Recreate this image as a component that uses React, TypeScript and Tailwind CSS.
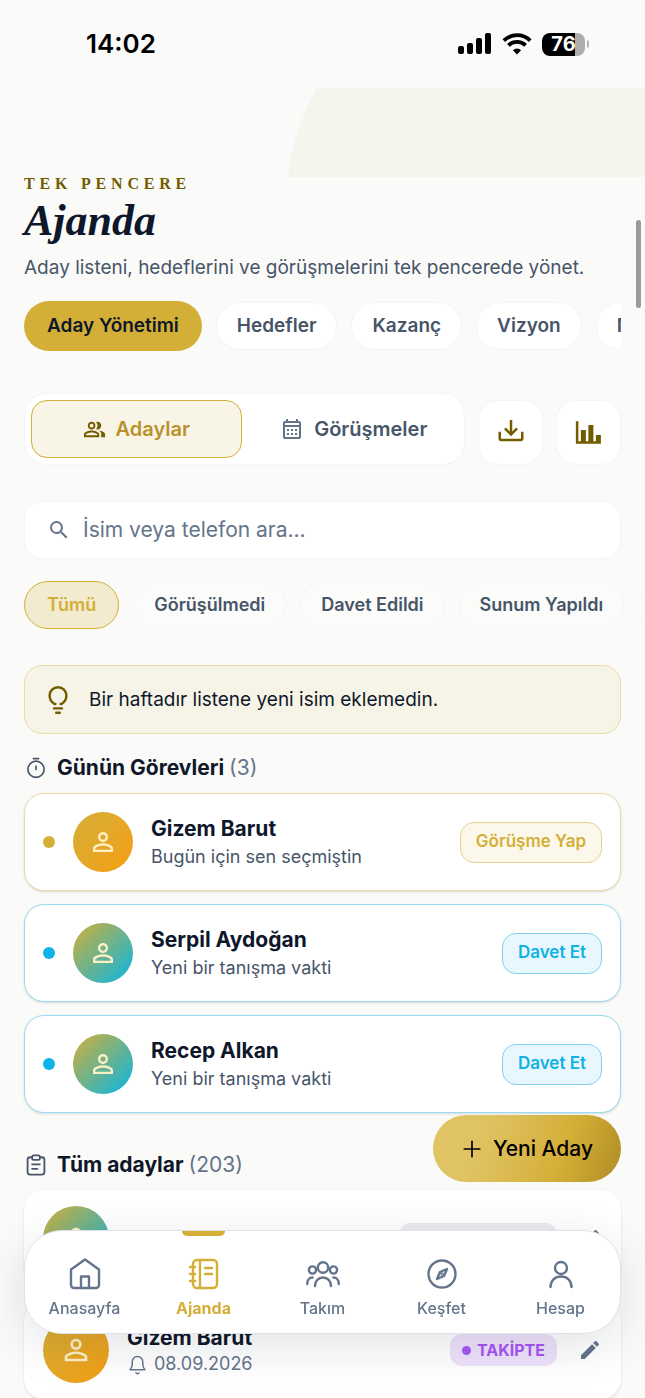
import type { ReactNode } from "react"
import { MdEdit, MdOutlineCalendarMonth, MdOutlinePeopleAlt, MdPersonOutline, MdSearch } from "react-icons/md"

const tabs = ["Hedefler", "Kazanç", "Vizyon", "Notlar"]
const filters = ["Görüşülmedi", "Davet Edildi", "Sunum Yapıldı", "Takipte"]

const tasks = [
  { name: "Gizem Barut", note: "Bugün için sen seçmiştin", action: "Görüşme Yap", tone: "gold" },
  { name: "Serpil Aydoğan", note: "Yeni bir tanışma vakti", action: "Davet Et", tone: "cyan" },
  { name: "Recep Alkan", note: "Yeni bir tanışma vakti", action: "Davet Et", tone: "cyan" },
]

const tones: Record<string, { card: string; dot: string; avatar: string; button: string }> = {
  gold: {
    card: "border-[#ecdba4]",
    dot: "bg-[#d4af37]",
    avatar: "bg-linear-to-br from-[#d4af37] to-[#f59e0b]",
    button: "border-[#e6d28c] bg-[#fbf7eb] text-[#d4af37]",
  },
  cyan: {
    card: "border-[#98dbf2]",
    dot: "bg-[#0fb2ea]",
    avatar: "bg-[linear-gradient(135deg,#d4af37,#06b6e4)]",
    button: "border-[#80d2ef] bg-[#e8f7fd] text-[#0fb2e4]",
  },
}

function Stroke({ size, width = 2, children }: { size: number; width?: number; children: ReactNode }) {
  return (
    <svg
      width={size}
      height={size}
      viewBox="0 0 34 34"
      fill="none"
      stroke="currentColor"
      strokeWidth={width}
      strokeLinecap="round"
      strokeLinejoin="round"
      className="shrink-0"
      aria-hidden="true"
    >
      {children}
    </svg>
  )
}

function StatusBar() {
  return (
    <div className="flex h-[88px] items-center justify-between pr-14 pl-[86px] text-black">
      <span className="text-[26px] leading-8 font-semibold">14:02</span>
      <div className="flex items-center gap-2.5">
        <svg width="34" height="22" viewBox="0 0 34 22" fill="currentColor" aria-hidden="true">
          <rect x="0" y="13" width="6" height="8" rx="2" />
          <rect x="9" y="10" width="6" height="11" rx="2" />
          <rect x="18" y="5" width="6" height="16" rx="2" />
          <rect x="27" y="0" width="6" height="21" rx="2" />
        </svg>
        <svg width="30" height="22" viewBox="0 0 30 22" fill="none" stroke="currentColor" strokeWidth="3.8" aria-hidden="true">
          <path d="M1.8 7.6a18.8 18.8 0 0 1 26.4 0" />
          <path d="M6.4 12.4a12.2 12.2 0 0 1 17.2 0" />
          <path d="M15 21.6l-4.1-4.4a5.9 5.9 0 0 1 8.2 0z" fill="currentColor" stroke="none" />
        </svg>
        <div className="flex items-center gap-0.5">
          <div className="flex h-[23px] w-[43px] items-center justify-center rounded-lg bg-linear-to-r from-black from-77% to-[#adadad] to-77% text-xl leading-6 font-bold text-white">
            76
          </div>
          <div className="h-2 w-0.5 rounded-r-full bg-[#b5b5b5]" />
        </div>
      </div>
    </div>
  )
}

function SectionTitle({ icon, title, count }: { icon: ReactNode; title: string; count: number }) {
  return (
    <h2 className="flex items-center gap-2.5 px-px text-[21px] leading-7 font-bold text-[#0f172a]">
      <span className="text-[#475569]">{icon}</span>
      <span>
        {title} <span className="font-normal text-[#64748b]">({count})</span>
      </span>
    </h2>
  )
}

function TaskCard({ task }: { task: (typeof tasks)[number] }) {
  const tone = tones[task.tone]
  return (
    <li className={`flex h-[98px] items-center rounded-[20px] border bg-white px-[18px] shadow-sm ${tone.card}`}>
      <span className={`size-3 shrink-0 rounded-full ${tone.dot}`} />
      <span className={`ml-[18px] flex size-15 shrink-0 items-center justify-center rounded-full text-[#fbf0c4] ${tone.avatar}`}>
        <MdPersonOutline size={30} />
      </span>
      <div className="ml-[18px] flex-1 pt-0.5">
        <h3 className="text-[21px] leading-7 font-bold text-[#0f172a]">{task.name}</h3>
        <p className="text-lg leading-7 text-[#475569]">{task.note}</p>
      </div>
      <button type="button" className={`h-[41px] rounded-[14px] border px-[15px] text-[17px] font-semibold ${tone.button}`}>
        {task.action}
      </button>
    </li>
  )
}

function NavItem({ label, active, children }: { label: string; active?: boolean; children: ReactNode }) {
  return (
    <a
      href="#"
      aria-current={active ? "page" : undefined}
      className={`flex flex-1 flex-col items-center ${active ? "font-bold text-[#d4af37]" : "font-medium text-[#64748b]"}`}
    >
      <span className={`h-[5px] w-[43px] rounded-b-md ${active ? "bg-[#d4af37]" : ""}`} />
      <span className="mt-[21px]">
        <Stroke size={34} width={2.4}>
          {children}
        </Stroke>
      </span>
      <span className="mt-[5px] text-base leading-6">{label}</span>
    </a>
  )
}

function BottomNav() {
  return (
    <nav className="fixed inset-x-6 bottom-16 flex h-[104px] rounded-[38px] border border-[#dfe3e9] bg-white shadow-[0_12px_48px_rgba(15,23,42,0.12)]">
      <NavItem label="Anasayfa">
        <path d="M3 12.500 17 2.500l14 10V28a3 3 0 0 1-3 3H6a3 3 0 0 1-3-3z" />
        <path d="M13 31V19.500h8V31" />
      </NavItem>
      <NavItem label="Ajanda" active>
        <rect x="6" y="3" width="24" height="28" rx="4" />
        <path d="M13 3v28M18 11h7M18 17h7M3 10h5M3 17h5M3 24h5" />
      </NavItem>
      <NavItem label="Takım">
        <circle cx="17" cy="10.500" r="5.200" />
        <circle cx="6.500" cy="13" r="3.600" />
        <circle cx="27.500" cy="13" r="3.600" />
        <path d="M9 29c0-5 3.500-8.500 8-8.500s8 3.500 8 8.500M1.200 27c0-3.800 2.200-6.500 5.400-6.500M32.800 27c0-3.800-2.200-6.500-5.400-6.500" />
      </NavItem>
      <NavItem label="Keşfet">
        <circle cx="17" cy="17" r="13.500" />
        <path d="m22 12-3 7-7 3 3-7z" />
        <circle cx="17" cy="17" r="0.6" />
      </NavItem>
      <NavItem label="Hesap">
        <circle cx="17" cy="11" r="6" />
        <path d="M6.500 30c0-6.500 4.500-10.500 10.500-10.500S27.500 23.500 27.500 30" />
      </NavItem>
    </nav>
  )
}

export default function App() {
  return (
    <div className="min-h-screen overflow-x-hidden bg-[#fafaf8] font-['Inter',sans-serif] text-[#0f172a]">
      <StatusBar />

      {/* faint curved band behind the header */}
      <div className="flex h-[89px] justify-end">
        <svg className="h-full w-[357px]" viewBox="0 0 357 89" preserveAspectRatio="none" aria-hidden="true">
          <path d="M0 89C3 60 13 28 29 0H357V89Z" fill="#f5f4ed" />
        </svg>
      </div>

      <header className="px-6">
        <p className="font-['Liberation_Serif',serif] text-base leading-3.5 font-bold tracking-[0.3em] text-[#735c00]">TEK PENCERE</p>
        <h1 className="font-['Liberation_Serif',serif] text-[44px] leading-[60px] font-bold text-[#0f172a] italic">Ajanda</h1>
        <p className="mt-[3px] text-[19px] leading-7 text-[#475569]">Aday listeni, hedeflerini ve görüşmelerini tek pencerede yönet.</p>

        <nav className="mt-[19px] flex items-center gap-3.5 overflow-hidden">
          <button type="button" className="h-[50px] shrink-0 rounded-full bg-[#d4af37] px-[23px] text-[19px] font-semibold text-[#0f172a]">
            Aday Yönetimi
          </button>
          {tabs.map((tab) => (
            <button
              key={tab}
              type="button"
              className="h-12 shrink-0 rounded-full border border-[#f5f5f4] bg-white px-5 text-[19px] font-semibold text-[#475569]"
            >
              {tab}
            </button>
          ))}
        </nav>
      </header>

      <main className="px-6 pt-[42px]">
        <div className="flex items-end gap-[13px]">
          <div className="flex h-[72px] flex-1 gap-2 rounded-[22px] border border-[#f4f5f5] bg-white p-1.5">
            <button
              type="button"
              className="flex flex-1 items-center justify-center gap-2.5 rounded-2xl border border-[#d4af37] bg-[#f8f4e6] text-xl font-semibold text-[#b8912b]"
            >
              <MdOutlinePeopleAlt size={23} className="text-[#735c00]" />
              Adaylar
            </button>
            <button type="button" className="flex flex-1 items-center justify-center gap-2.5 text-xl font-semibold text-[#475569]">
              <MdOutlineCalendarMonth size={24} className="text-[#64748b]" />
              Görüşmeler
            </button>
          </div>
          <button
            type="button"
            aria-label="İndir"
            className="flex size-[65px] items-center justify-center rounded-[20px] border border-[#f4f5f5] bg-white text-[#735c00]"
          >
            <svg width="30" height="30" viewBox="0 0 24 24" fill="currentColor" aria-hidden="true">
              <path d="M2 11H4V16.500H20V11H22V16.500C22 17.600 21.110 18.500 20 18.500H4C2.900 18.500 2 17.600 2 16.500V11M12 14.500L17.550 9.040L16.130 7.630L13 10.750V1.500H11V10.750L7.880 7.630L6.460 9.050L12 14.500Z" />
            </svg>
          </button>
          <button
            type="button"
            aria-label="İstatistikler"
            className="flex size-[65px] items-center justify-center rounded-[20px] border border-[#f4f5f5] bg-white text-[#735c00]"
          >
            <svg width="30" height="30" viewBox="0 0 24 24" fill="currentColor" aria-hidden="true">
              <path d="M21.500,20.500H1.500V2.500H3.500V18.500H5.500V9.500H9.500V18.500H11.500V5.500H15.500V18.500H17.500V13.500H21.500Z" />
            </svg>
          </button>
        </div>

        <label className="mt-9 flex h-[58px] items-center gap-3 rounded-[18px] border border-[#f4f5f5] bg-white px-[22px]">
          <MdSearch size={24} className="text-[#64748b]" />
          <input
            type="search"
            aria-label="Aday ara"
            placeholder="İsim veya telefon ara..."
            className="min-w-0 flex-1 text-[21px] leading-7 outline-none placeholder:text-[#64748b]"
          />
        </label>

        <div className="mt-[22px] -mr-6 flex gap-3.5 overflow-hidden">
          <button type="button" className="h-12 shrink-0 rounded-full border border-[#d4af37] bg-[#f2ebd0] px-[22px] text-lg font-semibold text-[#d4af37]">
            Tümü
          </button>
          {filters.map((filter) => (
            <button
              key={filter}
              type="button"
              className="h-12 shrink-0 rounded-full border border-[#f6f6f5] bg-[#fbfbfa] px-5 text-lg font-semibold text-[#475569]"
            >
              {filter}
            </button>
          ))}
        </div>

        <div className="mt-9 flex h-[69px] items-center gap-4 rounded-[18px] border border-[#ecdba4] bg-[#f6f3e7] px-[18px]">
          <span className="text-[#735c00]">
            <Stroke size={30} width={2.8}>
              <path d="M13 21.500C9.700 19.500 7.500 16.500 7.500 12a9.500 9.500 0 0 1 19 0c0 4.500-2.200 7.500-5.500 9.500M13 21.500h1M20 21.500h1M12.500 26.500h9M15 31.500h4" />
            </Stroke>
          </span>
          <p className="text-[19px] leading-7">Bir haftadır listene yeni isim eklemedin.</p>
        </div>

        <section className="mt-5">
          <SectionTitle
            title="Günün Görevleri"
            count={3}
            icon={
              <Stroke size={22} width={2.6}>
                <circle cx="17" cy="19" r="12.500" />
                <path d="M13 2.500h8M17 14v5" />
              </Stroke>
            }
          />
          <ul className="mt-[11px] flex flex-col gap-[13px]">
            {tasks.map((task) => (
              <TaskCard key={task.name} task={task} />
            ))}
          </ul>
        </section>

        <section className="mt-[38px]">
          <SectionTitle
            title="Tüm adaylar"
            count={203}
            icon={
              <Stroke size={22} width={2.8}>
                <path d="M11 5H8a4 4 0 0 0-4 4v19a4 4 0 0 0 4 4h18a4 4 0 0 0 4-4V9a4 4 0 0 0-4-4h-3" />
                <rect x="11" y="2" width="12" height="7" rx="2.500" />
                <path d="M11 16h12M11 23h8" />
              </Stroke>
            }
          />
          <ul className="mt-[11px] flex flex-col gap-[13px]">
            <li className="flex h-[98px] items-center rounded-[20px] bg-white px-[19px] shadow-sm">
              <span className="flex size-[66px] shrink-0 items-center justify-center rounded-full bg-[linear-gradient(135deg,#d4af37,#06b6e4)] text-[#fbf0c4]">
                <MdPersonOutline size={34} />
              </span>
              <h3 className="ml-[18px] flex-1 pt-2 text-[21px] leading-7 font-bold">Recep Alkan</h3>
              <span className="flex h-8 items-center gap-1.5 rounded-xl bg-[#ebecee] px-2 text-base font-bold text-[#64748b]">
                <span className="size-[9px] rounded-full bg-[#64748b]" />
                SUNUM YAPILDI
              </span>
              <button type="button" aria-label="Düzenle" className="ml-[21px] text-[#64748b]">
                <MdEdit size={24} />
              </button>
            </li>
            <li className="flex h-[98px] items-center rounded-[20px] bg-white px-[19px] shadow-sm">
              <span className="flex size-[66px] shrink-0 items-center justify-center rounded-full bg-linear-to-br from-[#d4af37] to-[#f59e0b] text-[#fbf0c4]">
                <MdPersonOutline size={34} />
              </span>
              <div className="ml-[18px] flex-1">
                <h3 className="text-[21px] leading-7 font-bold">Gizem Barut</h3>
                <p className="flex items-center gap-1.5 text-lg leading-6 text-[#64748b]">
                  <Stroke size={21} width={2.4}>
                    <path d="M5 25.500h24c-2.500-3-3.500-5-3.500-9V12.500a8.500 8.500 0 0 0-17 0v4c0 4-1 6-3.500 9zM14.500 30.500a3 3 0 0 0 5 0" />
                  </Stroke>
                  08.09.2026
                </p>
              </div>
              <span className="flex h-8 items-center gap-1.5 rounded-xl bg-[#efe2fb] px-3 text-base font-bold text-[#a855f7]">
                <span className="size-[9px] rounded-full bg-[#a855f7]" />
                TAKİPTE
              </span>
              <button type="button" aria-label="Düzenle" className="ml-[21px] text-[#64748b]">
                <MdEdit size={24} />
              </button>
            </li>
          </ul>
        </section>
      </main>

      <button
        type="button"
        className="fixed right-6 bottom-[216px] flex h-[67px] items-center gap-2.5 rounded-full bg-linear-110 from-[#e0c463] from-25% via-[#d4af37] via-68% to-[#b08d25] px-7 text-[21px] font-medium text-black"
      >
        <Stroke size={22} width={2.6}>
          <path d="M17 5v24M5 17h24" />
        </Stroke>
        Yeni Aday
      </button>

      <BottomNav />

      {/* scroll position indicator */}
      <div className="fixed top-[220px] right-1 h-[88px] w-[5px] rounded-full bg-[#9b9b9b]" />
    </div>
  )
}
